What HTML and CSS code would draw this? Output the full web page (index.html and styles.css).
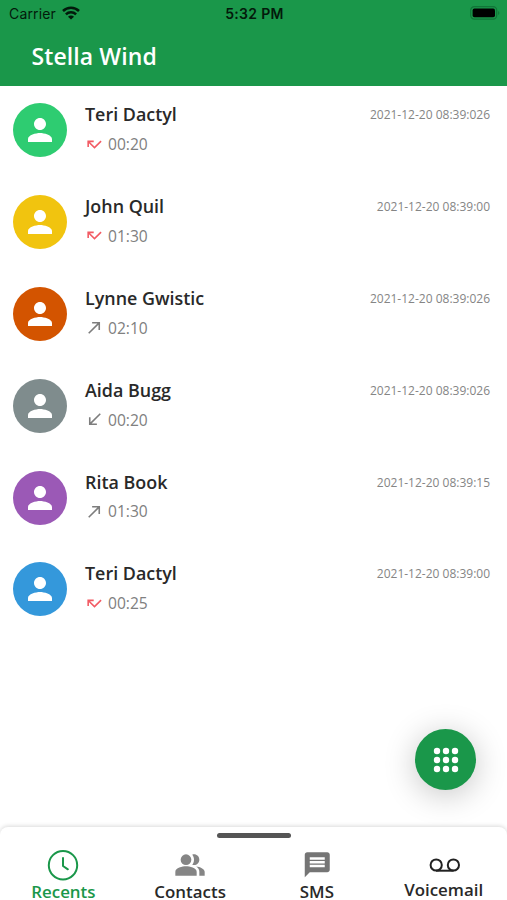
FILE: index.html
```
<!DOCTYPE html>
<html lang="en">
<head>
<meta charset="utf-8">
<title>Recents</title>
<link rel="stylesheet" href="styles.css">
</head>
<body>
<svg class="defs" aria-hidden="true">
  <symbol id="person" viewBox="0 0 24 24"><path d="M12 12c2.21 0 4-1.79 4-4s-1.79-4-4-4-4 1.79-4 4 1.79 4 4 4zm0 2c-2.67 0-8 1.34-8 4v2h16v-2c0-2.66-5.33-4-8-4z"/></symbol>
  <symbol id="missed" viewBox="0 0 24 24"><path d="M19.59 7L12 14.59 6.41 9H11V7H3v8h2v-4.59l7 7 9-9z"/></symbol>
  <symbol id="made" viewBox="0 0 24 24"><path d="M9 5v2h6.59L4 18.59 5.41 20 17 8.41V15h2V5z"/></symbol>
  <symbol id="received" viewBox="0 0 24 24"><path d="M20 5.41L18.59 4 7 15.59V9H5v10h10v-2H8.41z"/></symbol>
</svg>
<div class="app">
  <header class="header">
    <div class="status">
      <div class="carrier"><span>Carrier</span>
        <svg class="wifi" viewBox="0 0 18 14"><g fill="none" stroke="#021a0b" stroke-width="2.5"><path d="M1 5a11.4 11.4 0 0 1 16 0"/><path d="M3.9 8.3a7.3 7.3 0 0 1 10.2 0"/></g><path fill="#021a0b" d="M9 13.6L6 10.8a4.2 4.2 0 0 1 6 0z"/></svg>
      </div>
      <div class="clock">5:32 PM</div>
      <svg class="battery" viewBox="0 0 30 14"><rect x=".7" y=".7" width="26" height="12.4" rx="3.6" fill="none" stroke="#117538" stroke-width="1.2"/><rect x="2.6" y="2.6" width="22.4" height="8.6" rx="1.8"/><path fill="#117538" d="M28.2 5v4c1.5-.6 1.5-3.4 0-4z"/></svg>
    </div>
    <h1 class="title">Stella Wind</h1>
  </header>
  <main class="calls">
    <div class="call"><div class="avatar green"><svg><use href="#person"/></svg></div><div class="info"><div class="name">Teri Dactyl</div><div class="detail missed"><svg><use href="#missed"/></svg><span>00:20</span></div></div><time>2021-12-20 08:39:026</time></div>
    <div class="call"><div class="avatar yellow"><svg><use href="#person"/></svg></div><div class="info"><div class="name">John Quil</div><div class="detail missed"><svg><use href="#missed"/></svg><span>01:30</span></div></div><time>2021-12-20 08:39:00</time></div>
    <div class="call"><div class="avatar orange"><svg><use href="#person"/></svg></div><div class="info"><div class="name">Lynne Gwistic</div><div class="detail"><svg><use href="#made"/></svg><span>02:10</span></div></div><time>2021-12-20 08:39:026</time></div>
    <div class="call"><div class="avatar gray"><svg><use href="#person"/></svg></div><div class="info"><div class="name">Aida Bugg</div><div class="detail"><svg><use href="#received"/></svg><span>00:20</span></div></div><time>2021-12-20 08:39:026</time></div>
    <div class="call"><div class="avatar purple"><svg><use href="#person"/></svg></div><div class="info"><div class="name">Rita Book</div><div class="detail"><svg><use href="#made"/></svg><span>01:30</span></div></div><time>2021-12-20 08:39:15</time></div>
    <div class="call"><div class="avatar blue"><svg><use href="#person"/></svg></div><div class="info"><div class="name">Teri Dactyl</div><div class="detail missed"><svg><use href="#missed"/></svg><span>00:25</span></div></div><time>2021-12-20 08:39:00</time></div>
  </main>
  <button class="fab" aria-label="Dial pad">
    <svg viewBox="0 0 26 26" fill="#fff"><circle cx="4" cy="4" r="3.2"/><circle cx="13" cy="4" r="3.2"/><circle cx="22" cy="4" r="3.2"/><circle cx="4" cy="13" r="3.2"/><circle cx="13" cy="13" r="3.2"/><circle cx="22" cy="13" r="3.2"/><circle cx="4" cy="22" r="3.2"/><circle cx="13" cy="22" r="3.2"/><circle cx="22" cy="22" r="3.2"/></svg>
  </button>
  <nav class="tabs">
    <div class="handle"></div>
    <div class="tab active">
      <svg viewBox="0 0 32 32" fill="none" stroke="currentColor" stroke-width="2" stroke-linecap="round" stroke-linejoin="round"><circle cx="16" cy="16.2" r="14.2"/><path d="M16 9v8l4.9 3.3"/></svg>
      <span>Recents</span>
    </div>
    <div class="tab">
      <svg viewBox="0 0 24 24" fill="#858585"><path d="M16.67 13.13C18.04 14.06 19 15.32 19 17v3h4v-3c0-2.18-3.57-3.47-6.33-3.87z"/><circle cx="9" cy="8" r="4"/><path d="M15 12c2.21 0 4-1.79 4-4s-1.79-4-4-4c-.47 0-.91.1-1.33.24C14.5 5.27 15 6.58 15 8s-.5 2.73-1.33 3.76c.42.14.86.24 1.33.24zM9 13c-2.67 0-8 1.34-8 4v3h16v-3c0-2.66-5.33-4-8-4z"/></svg>
      <span>Contacts</span>
    </div>
    <div class="tab">
      <svg viewBox="-1 -.5 25.6 25.6" fill="#757575"><path d="M20 2H4c-1.1 0-1.99.9-1.99 2L2 22l4-4h14c1.1 0 2-.9 2-2V4c0-1.1-.9-2-2-2zm-2 12H6v-2h12v2zm0-3H6V9h12v2zm0-3H6V6h12v2z"/></svg>
      <span>SMS</span>
    </div>
    <div class="tab voicemail">
      <svg viewBox="0 0 32 32" fill="none" stroke="#222" stroke-width="2"><circle cx="8.2" cy="16" r="5.6"/><circle cx="25.4" cy="16" r="5.6"/><path d="M8 21.7h17.6"/></svg>
      <span>Voicemail</span>
    </div>
  </nav>
</div>
</body>
</html>
```

FILE: styles.css
```
* { box-sizing: border-box; }
body { margin: 0; background: #fff; font-family: "Open Sans", "Noto Sans", sans-serif; }
.defs { display: none; }
.app { position: relative; width: 507px; height: 900px; overflow: hidden; display: flex; flex-direction: column; }
.header { height: 86.4px; flex: none; background: #1a974a; }
.status { height: 27px; padding: 0 7px 0 9px; display: grid; grid-template-columns: 1fr auto 1fr; align-items: center; font: 14px/27px "Inter", sans-serif; color: #031a0b; }
.carrier { display: flex; align-items: center; gap: 6px; letter-spacing: .15px; }
.wifi { width: 18px; height: 14px; margin-top: -1px; }
.clock { font-weight: 600; letter-spacing: .3px; }
.battery { width: 30px; height: 14px; margin-top: -1px; justify-self: end; }
.title { margin: 14px 0 0 31.5px; font-size: 23px; line-height: 30px; font-weight: 600; letter-spacing: .1px; color: #fff; }
.calls { flex: 1; padding-top: 17.1px; }
.call { height: 91.8px; padding: 0 17px 0 13px; display: flex; align-items: flex-start; }
.avatar { width: 54px; height: 54px; border-radius: 50%; flex: none; display: flex; align-items: center; justify-content: center; }
.avatar svg { width: 36px; height: 36px; fill: #fff; }
.green { background: #2ecc71; }
.yellow { background: #f1c40f; }
.orange { background: #d35400; }
.gray { background: #7f8c8d; }
.purple { background: #9b59b6; }
.blue { background: #3498db; }
.info { flex: 1; margin-left: 18px; }
.name { font-size: 17.9px; line-height: 23.6px; font-weight: 600; color: #292929; }
.detail { display: flex; align-items: center; gap: 4px; height: 20px; margin-top: 7.1px; font-size: 15.6px; color: #808080; }
.detail svg { width: 19px; height: 19px; fill: #7d7d7d; }
.detail.missed svg { fill: #f25a63; }
time { font-size: 12px; line-height: 24.4px; color: #858585; }
.fab { position: absolute; right: 30.8px; bottom: 110px; width: 61px; height: 61px; padding: 0; border: 0; border-radius: 50%; background: #1a974a; box-shadow: 0 5px 32px rgba(0,0,0,.23); display: flex; align-items: center; justify-content: center; }
.fab svg { width: 26px; height: 26px; }
.tabs { position: relative; height: 73.5px; flex: none; display: grid; grid-template-columns: repeat(4, 1fr); padding-top: 22px; background: #fff; border-radius: 8px 8px 0 0; box-shadow: 0 -1px 4px rgba(0,0,0,.15); }
.handle { position: absolute; top: 6px; left: 217px; width: 74px; height: 5px; border-radius: 3px; background: #555; }
.tab { display: flex; flex-direction: column; align-items: center; font-size: 16.9px; font-weight: 600; line-height: 15px; color: #292929; }
.tab svg { width: 32px; height: 32px; margin-bottom: 3px; flex: none; }
.tab.active { color: #1a974a; }
.voicemail span { margin-top: -2px; }
```
